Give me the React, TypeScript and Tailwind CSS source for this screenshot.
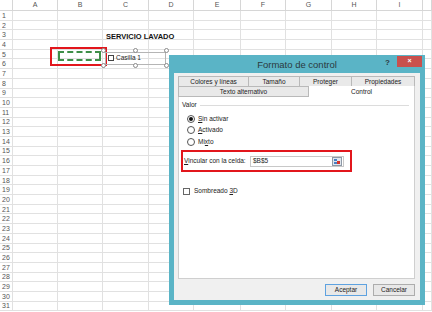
import React from 'react';

const COLS = [
  { label: '', w: 'w-[13px]' },
  { label: 'A', w: 'w-[45px]' },
  { label: 'B', w: 'w-[45px]' },
  { label: 'C', w: 'w-[46px]' },
  { label: 'D', w: 'w-[45px]' },
  { label: 'E', w: 'w-[47px]' },
  { label: 'F', w: 'w-[45px]' },
  { label: 'G', w: 'w-[46px]' },
  { label: 'H', w: 'w-[45px]' },
  { label: 'I', w: 'w-[46px]' },
  { label: '', w: 'w-[9px]' },
];

const ROWS = Array.from({ length: 31 }, (_, i) => i + 1);

function Handle({ className }: { className: string }) {
  return (
    <div className={`absolute w-[5px] h-[5px] rounded-full border border-[#8a8a8a] bg-white ${className}`} />
  );
}

function Radio({ checked, children }: { checked?: boolean; children: React.ReactNode }) {
  return (
    <div className="flex items-center gap-[3px] h-[11.5px]">
      <div className="w-[8px] h-[8px] rounded-full border border-[#555] bg-white flex items-center justify-center">
        {checked && <div className="w-[4px] h-[4px] rounded-full bg-[#111]" />}
      </div>
      <span>{children}</span>
    </div>
  );
}

function RangeIcon() {
  return (
    <svg width="10" height="9" viewBox="0 0 10 9">
      <rect x="0.5" y="0.5" width="9" height="8" fill="#dfe6ee" stroke="#8d99a6" />
      <rect x="2" y="2" width="3" height="2" fill="#4a7fc1" />
      <rect x="2" y="5" width="3" height="2" fill="#4a7fc1" />
      <rect x="5" y="4" width="3" height="3" fill="#d9352a" />
    </svg>
  );
}

function Sheet() {
  return (
    <div className="flex flex-col">
      <div className="flex h-[11px]">
        {COLS.map((c, i) => (
          <div
            key={i}
            className={`${c.w} shrink-0 border-r border-b border-[#d6d6d6] flex items-center justify-center text-[7px] text-[#555]`}
          >
            {c.label}
          </div>
        ))}
      </div>
      {ROWS.map(r => (
        <div key={r} className="flex h-[9.7px]">
          {COLS.map((c, i) => (
            <div
              key={i}
              className={`${c.w} shrink-0 border-r border-b border-[#e1e1e1] ${
                i === 0 ? 'flex items-center justify-start pl-[2px] text-[7px] text-[#555] leading-none' : ''
              }`}
            >
              {i === 0 ? r : null}
            </div>
          ))}
        </div>
      ))}
    </div>
  );
}

function Dialog() {
  return (
    <div className="absolute left-[169px] top-[55px] w-[256px] h-[250px] bg-[#5ab4c6] flex flex-col px-[5px] pb-[5px]">
      {/* Title bar */}
      <div className="h-[18px] flex items-center justify-end relative">
        <span className="absolute inset-x-0 top-[3px] text-center text-[9.5px] text-[#2b3a40]">Formato de control</span>
        <span className="relative text-[8px] font-bold text-[#2b3a40] mr-[7px] -mt-[3px]">?</span>
        <div className="relative w-[25px] h-[11px] bg-[#c9504d] flex items-center justify-center text-white text-[7px] font-bold self-start mt-[1px] -mr-[2px]">
          ×
        </div>
      </div>

      {/* Body */}
      <div className="flex-1 bg-[#f0f0f0] flex flex-col pl-[4px] pr-[5px] pt-[3px]">
        {/* Tabs */}
        <div className="flex h-[11px] text-[6.5px] text-[#222]">
          <div className="w-[71px] border border-[#b9b9b9] bg-[#e9e9e9] flex items-center justify-center">Colores y líneas</div>
          <div className="w-[51px] border border-l-0 border-[#b9b9b9] bg-[#e9e9e9] flex items-center justify-center">Tamaño</div>
          <div className="w-[52px] border border-l-0 border-[#b9b9b9] bg-[#e9e9e9] flex items-center justify-center">Proteger</div>
          <div className="w-[63px] border border-l-0 border-[#b9b9b9] bg-[#e9e9e9] flex items-center justify-center">Propiedades</div>
        </div>
        <div className="flex h-[10px] text-[6.5px] text-[#222]">
          <div className="w-[131px] border border-t-0 border-[#b9b9b9] bg-[#e9e9e9] flex items-center justify-center">Texto alternativo</div>
          <div className="w-[106px] border-r border-[#cfcfcf] bg-white flex items-center justify-center -mt-[1px]">Control</div>
        </div>

        {/* Panel */}
        <div className="w-[237px] h-[182px] bg-white border border-t-0 border-[#cfcfcf] flex flex-col text-[6.5px] text-[#222] px-[2px] pt-[3px]">
          <div className="flex items-center gap-[3px]">
            <span className="pl-[1px]">Valor</span>
            <div className="flex-1 h-px bg-[#dcdcdc] mt-[1px] mr-[3px]" />
          </div>
          <div className="flex flex-col pl-[6px] pt-[3px]">
            <Radio checked>
              <u>S</u>in activar
            </Radio>
            <Radio>
              <u>A</u>ctivado
            </Radio>
            <Radio>
              Mi<u>x</u>to
            </Radio>
          </div>

          <div className="mt-[3px] w-[171px] h-[22px] border-2 border-[#e2161c] flex items-center pl-[1px] pr-[6px]">
            <span className="w-[66px]">
              <u>V</u>incular con la celda:
            </span>
            <div className="flex-1 h-[11px] border border-[#c8c8c8] bg-white flex items-center justify-between pl-[2px] pr-[1px]">
              <span>$B$5</span>
              <RangeIcon />
            </div>
          </div>

          <div className="mt-[14px] flex items-center gap-[4px] pl-[2px]">
            <div className="w-[7px] h-[7px] border border-[#666] bg-white" />
            <span>
              Sombreado <u>3</u>D
            </span>
          </div>
        </div>

        {/* Buttons */}
        <div className="flex-1 flex items-start justify-end gap-[6px] pt-[5px] text-[6.5px] text-[#222]">
          <div className="w-[42px] h-[12px] border border-[#5ea2e0] bg-[#e8e8e8] flex items-center justify-center">Aceptar</div>
          <div className="w-[42px] h-[12px] border border-[#adadad] bg-[#e8e8e8] flex items-center justify-center">Cancelar</div>
        </div>
      </div>
    </div>
  );
}

export default function App() {
  return (
    <div className="relative w-[432px] h-[312px] overflow-hidden bg-white font-['Liberation_Sans',Arial,sans-serif]">
      <Sheet />

      {/* Title cell */}
      <div className="absolute left-[106px] top-[32px] text-[7.5px] font-bold text-[#111] leading-[10px]">SERVICIO LAVADO</div>

      {/* Red highlight around B5 */}
      <div className="absolute left-[50px] top-[47px] w-[57px] h-[19px] border-2 border-[#e2161c]" />
      {/* Marching ants copy border */}
      <div className="absolute left-[58px] top-[51px] w-[43px] h-[10px] border-2 border-dashed border-[#3f8f48]" />

      {/* Checkbox control selection */}
      <div className="absolute left-[105px] top-[52px] w-[61px] h-[13px] border border-[#b5b5b5]" />
      <div className="absolute left-[108px] top-[55px] w-[6px] h-[6px] border border-[#444] bg-white" />
      <div className="absolute left-[116px] top-[53px] text-[6.5px] text-[#222] leading-[10px]">Casilla 1</div>
      <Handle className="left-[101px] top-[48px]" />
      <Handle className="left-[133px] top-[48px]" />
      <Handle className="left-[164px] top-[48px]" />
      <Handle className="left-[101px] top-[63px]" />
      <Handle className="left-[133px] top-[63px]" />
      <Handle className="left-[164px] top-[63px]" />

      <Dialog />
    </div>
  );
}
